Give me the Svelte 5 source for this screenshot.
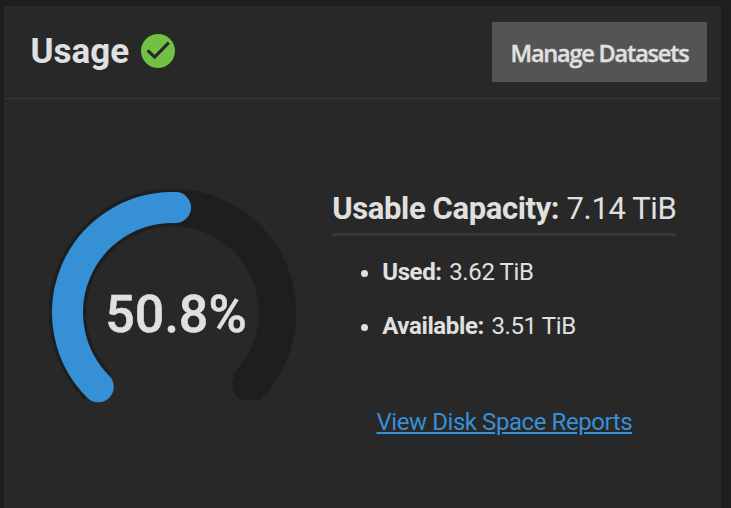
<script lang="ts">
  const usedPercent = 50.8;
  const capacity = '7.14 TiB';
  const stats = [
    { label: 'Used:', value: '3.62 TiB' },
    { label: 'Available:', value: '3.51 TiB' },
  ];

  const centerX = 124.5;
  const centerY = 125.5;
  const radius = 105;

  // angles are in degrees, clockwise from the top of the gauge
  function point(angle: number) {
    const rad = (angle * Math.PI) / 180;
    return `${centerX + radius * Math.sin(rad)} ${centerY - radius * Math.cos(rad)}`;
  }

  function arc(from: number, to: number) {
    const large = to - from > 180 ? 1 : 0;
    return `M${point(from)} A${radius} ${radius} 0 ${large} 1 ${point(to)}`;
  }

  const usedEnd = -135 + (269 * usedPercent) / 100;
</script>

<section class="card">
  <header class="header">
    <h3 class="title">
      Usage
      <svg class="status" viewBox="0 0 34 34" aria-hidden="true">
        <circle cx="17" cy="17" r="17" fill="#71c143" />
        <path d="M6.6 16.4 L13.7 23.1 L27.8 8.6" fill="none" stroke="#282828" stroke-width="3.2" />
      </svg>
    </h3>
    <button type="button" class="manage">Manage Datasets</button>
  </header>

  <div class="content">
    <div class="gauge">
      <svg viewBox="0 0 250 250" aria-hidden="true">
        <path class="track" d={arc(-135, 136)} />
        <path class="rest" d={arc(usedEnd, 134)} />
        <path class="used" d={arc(-135, usedEnd)} />
      </svg>
      <span class="percent">{usedPercent}%</span>
    </div>

    <div class="details">
      <div class="capacity"><strong>Usable Capacity:</strong> {capacity}</div>
      <ul class="stats">
        {#each stats as stat}
          <li><strong>{stat.label}</strong> {stat.value}</li>
        {/each}
      </ul>
      <a class="reports" href="#reports">View Disk Space Reports</a>
    </div>
  </div>
</section>

<style>
  :global(body) {
    background: #1e1e1e;
  }
  :global(#app) {
    display: flow-root;
    height: 508px;
    overflow: hidden;
  }
  .card {
    box-sizing: border-box;
    width: 717px;
    height: 502px;
    margin: 6px 0 0 4px;
    background: #282828;
    color: #e0e0e0;
    font-family: Roboto, sans-serif;
    white-space: nowrap;
  }
  .header {
    box-sizing: border-box;
    display: flex;
    align-items: center;
    justify-content: space-between;
    height: 93px;
    padding: 0 14px 0 26.5px;
    border-bottom: 1px solid #383838;
  }
  .title {
    display: flex;
    align-items: center;
    gap: 11.5px;
    margin: -2px 0 0;
    font-size: 35px;
    font-weight: 700;
  }
  .status {
    width: 34px;
    height: 34px;
  }
  .manage {
    width: 215px;
    height: 60px;
    padding: 1px 0 0;
    border: none;
    background: #545454;
    color: #e0e0e0;
    font: 600 23.5px 'Open Sans', sans-serif;
    letter-spacing: -1.2px;
    -webkit-text-stroke: 0.4px #e0e0e0;
  }
  .content {
    display: flex;
    height: 405px;
  }
  .gauge {
    position: relative;
    width: 250px;
    height: 250px;
    margin: 88px 0 0 44px;
  }
  .gauge svg {
    display: block;
  }
  .gauge path {
    fill: none;
  }
  .track {
    stroke: #1e1e1e;
    stroke-width: 37.5;
  }
  .rest,
  .used {
    stroke-width: 31;
    stroke-linecap: round;
  }
  .rest {
    stroke: #1e1e1e;
  }
  .used {
    stroke: #3690d6;
  }
  .percent {
    position: absolute;
    inset: 4px 0 0 6px;
    display: flex;
    align-items: center;
    justify-content: center;
    font: 500 52px Roboto, sans-serif;
    -webkit-text-stroke: 0.5px #e0e0e0;
  }
  .details {
    margin: 85px 0 0 34.2px;
  }
  .capacity {
    height: 44px;
    padding-bottom: 5px;
    border-bottom: 3px solid #383838;
    font-size: 31px;
    line-height: 50px;
    letter-spacing: -0.38px;
  }
  .stats {
    margin: 9px 0 0;
    padding-left: 50px;
    font-size: 24px;
    line-height: 54px;
    letter-spacing: -0.38px;
  }
  .stats strong {
    margin-right: 2px;
  }
  .reports {
    display: block;
    width: max-content;
    margin: 55px 0 0 44.3px;
    color: #3690d6;
    font-size: 24px;
    line-height: 28px;
    letter-spacing: -0.43px;
  }
</style>
